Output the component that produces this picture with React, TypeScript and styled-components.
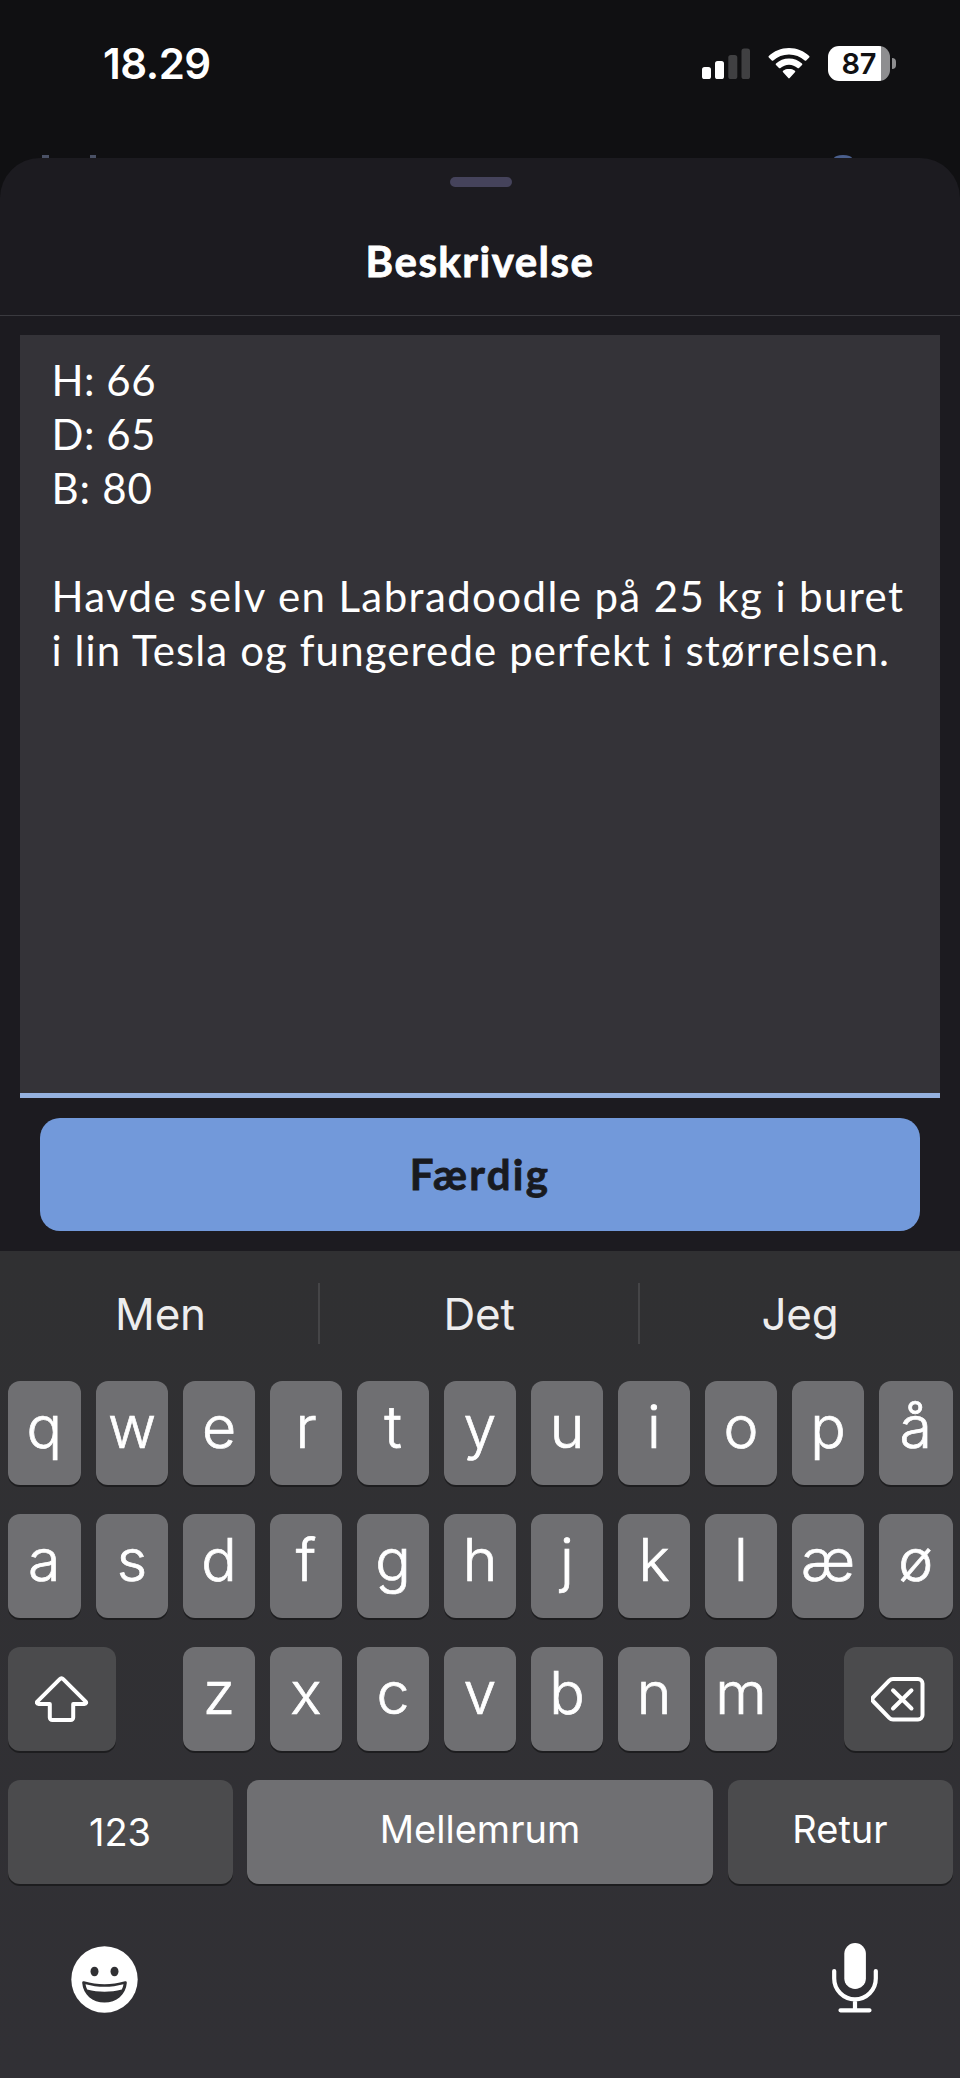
import React from "react";
import styled, { createGlobalStyle } from "styled-components";

const ui = `Inter, "Liberation Sans", sans-serif`;
const brand = `Lato, "Open Sans", sans-serif`;

const GlobalStyle = createGlobalStyle`
  * { box-sizing: border-box; }
  html, body { margin: 0; padding: 0; background: #101012; }
  button { border: 0; padding: 0; margin: 0; background: none; font: inherit; color: inherit; }
`;

const Screen = styled.div`
  width: 960px;
  height: 2078px;
  display: flex;
  flex-direction: column;
  overflow: hidden;
  background: #101012;
  color: #fff;
  font-family: ${ui};
`;

const StatusBar = styled.header`
  height: 154px;
  flex: none;
  display: flex;
  align-items: flex-start;
  justify-content: space-between;
  padding: 39px 64.5px 0 103px;
`;

const Clock = styled.time`
  font-size: 42px;
  line-height: 50px;
  font-weight: 600;
  letter-spacing: -0.5px;
`;

const StatusIcons = styled.div`
  display: flex;
  align-items: flex-start;
  padding-top: 7px;
`;

const SignalIcon = styled.svg`
  width: 48px;
  height: 36px;
  margin-right: 18px;
`;

const WifiIcon = styled.svg`
  width: 42px;
  height: 36px;
  margin-right: 18px;
`;

const Battery = styled.div`
  display: flex;
  align-items: center;
  gap: 2px;
  height: 35px;
`;

const BatteryBody = styled.div`
  width: 61.5px;
  height: 35px;
  border-radius: 11px;
  background: linear-gradient(90deg, #fff 0 53.5px, #8e8e90 53.5px);
  color: #101012;
  font-size: 29px;
  line-height: 35px;
  font-weight: 600;
  letter-spacing: -0.3px;
  text-align: center;
`;

const BatteryTip = styled.div`
  width: 4px;
  height: 11px;
  border-radius: 0 5px 5px 0;
  background: #8e8e90;
`;

const Behind = styled.div`
  height: 4px;
  flex: none;
  display: flex;
  align-items: flex-start;
  padding: 1px 0 0 42px;
`;

const BehindMark = styled.i<{ $w: number; $gap: number; $round?: boolean }>`
  width: ${(p) => p.$w}px;
  height: 3px;
  margin-right: ${(p) => p.$gap}px;
  background: ${(p) => (p.$round ? "#4a5f8c" : "#4a5165")};
  border-radius: ${(p) => (p.$round ? "50% 50% 0 0 / 100% 100% 0 0" : "0")};
`;

const Sheet = styled.main`
  height: 1093px;
  flex: none;
  display: flex;
  flex-direction: column;
  background: #1c1b20;
  border-radius: 40px 40px 0 0;
`;

const SheetHeader = styled.div`
  height: 158px;
  flex: none;
  display: flex;
  flex-direction: column;
  align-items: center;
  border-bottom: 1px solid #3a3a3f;
`;

const Grabber = styled.div`
  width: 62px;
  height: 10px;
  margin: 19px 0 0 1px;
  border-radius: 5px;
  background: #45435b;
`;

const Title = styled.h1`
  margin: 48px 0 0;
  font-family: ${brand};
  font-size: 42px;
  line-height: 52px;
  font-weight: 700;
  letter-spacing: 1.5px;
  -webkit-text-stroke: 0.8px currentColor;
`;

const Description = styled.div`
  height: 763px;
  flex: none;
  margin: 19px 20px 0;
  padding: 18px 0 0 31.5px;
  background: #343338;
  border-bottom: 5px solid #95b1df;
  font-family: ${brand};
  font-size: 42px;
  line-height: 54px;
`;

const Line = styled.div<{ $spacing: number }>`
  height: 54px;
  white-space: pre;
  letter-spacing: ${(p) => p.$spacing}px;
`;

const DoneButton = styled.button`
  height: 113px;
  flex: none;
  margin: 20px 40px 0;
  border-radius: 20px;
  background: #7299da;
  color: #181a20;
  font-family: ${brand};
  font-size: 42px;
  line-height: 109px;
  font-weight: 700;
  letter-spacing: 2.3px;
  -webkit-text-stroke: 0.8px currentColor;
`;

const Keyboard = styled.section`
  flex: 1;
  display: flex;
  flex-direction: column;
  background: linear-gradient(#303032, #313035);
`;

const Suggestions = styled.div`
  height: 130px;
  flex: none;
  display: grid;
  grid-template-columns: 318px 320px 322px;
  align-items: center;
  padding-bottom: 6px;
`;

const Suggestion = styled.button`
  height: 61px;
  color: #ededee;
  font-size: 44px;
  line-height: 63px;
  font-weight: 400;
  letter-spacing: -0.2px;
  &:first-child { padding-left: 3px; }
  & + & { border-left: 2px solid #454547; }
`;

const Row = styled.div`
  height: 104px;
  flex: none;
  display: flex;
  justify-content: space-between;
  margin: 0 7.5px 29px;
`;

const KeyGroup = styled.div`
  display: flex;
  gap: 15px;
`;

const Key = styled.button<{ $width?: number; $dark?: boolean; $small?: boolean; $drop?: number }>`
  width: ${(p) => p.$width ?? 72}px;
  height: 104px;
  display: flex;
  align-items: center;
  justify-content: center;
  padding-bottom: ${(p) => p.$drop ?? 13}px;
  border-radius: 12px;
  background: ${(p) => (p.$dark ? "#4b4b4d" : "#6f6f72")};
  box-shadow: 0 2px 0 #1d1d1f;
  color: #fff;
  font-size: ${(p) => (p.$small ? 38 : 59)}px;
  line-height: 1;
  font-weight: ${(p) => (p.$small ? 400 : 300)};
  -webkit-text-stroke: ${(p) => (p.$small ? 0 : 0.7)}px currentColor;
`;

const KeyIcon = styled.svg`
  width: 54px;
  height: 48px;
`;

const BottomBar = styled.div`
  display: flex;
  justify-content: space-between;
  align-items: flex-start;
  padding: 27px 81px 0 71px;
`;

const EmojiIcon = styled.svg`
  width: 67px;
  height: 67px;
  margin-top: 6px;
`;

const MicIcon = styled.svg`
  width: 48px;
  height: 72px;
  margin-top: 3px;
`;

const lines: [string, number][] = [
  ["H: 66", 0.5],
  ["D: 65", 0.5],
  ["B: 80", 0.8],
  ["", 0],
  ["Havde selv en Labradoodle på 25 kg i buret", 1.39],
  ["i lin Tesla og fungerede perfekt i størrelsen.", 1.11],
];

export default function App() {
  return (
    <>
      <GlobalStyle />
      <Screen>
        <StatusBar>
          <Clock>18.29</Clock>
          <StatusIcons>
            <SignalIcon viewBox="0 0 48 36">
              <rect x="0" y="21" width="9" height="12" rx="2.6" fill="#fff" />
              <rect x="13" y="15" width="9" height="18" rx="2.6" fill="#fff" />
              <rect x="26.3" y="9" width="9" height="24" rx="2.6" fill="#404042" />
              <rect x="39.5" y="2.5" width="8.5" height="30.5" rx="2.6" fill="#404042" />
            </SignalIcon>
            <WifiIcon viewBox="0 0 42 36" fill="#fff">
              <path d="M21 2C13 2 6 5 .8 10c-.5.5-.5 1 0 1.500l3 3c.4.4 1 .4 1.500 0C9.500 10.600 15 8.500 21 8.500s11.500 2.100 15.700 6c.5.4 1.100.4 1.500 0l3-3c.5-.5.5-1 0-1.500C36 5 29 2 21 2z" />
              <path d="M21 12.500c-5 0-9.600 1.900-13 5-.5.5-.5 1 0 1.500l3 3c.4.4 1 .4 1.500 0C14.800 20 17.800 18.700 21 18.700s6.200 1.300 8.500 3.300c.5.4 1.100.4 1.500 0l3-3c.5-.5.5-1 0-1.500-3.400-3.100-8-5-13-5z" />
              <path d="M21 22.700c-2.300 0-4.300.8-5.900 2.100-.5.4-.5 1 0 1.500l5.200 5.800c.4.5 1 .5 1.400 0l5.200-5.800c.5-.5.5-1.100 0-1.500-1.600-1.300-3.600-2.100-5.900-2.100z" />
            </WifiIcon>
            <Battery>
              <BatteryBody>87</BatteryBody>
              <BatteryTip />
            </Battery>
          </StatusIcons>
        </StatusBar>
        <Behind>
          <BehindMark $w={7} $gap={41} />
          <BehindMark $w={6} $gap={738} />
          <BehindMark $w={18} $gap={0} $round />
        </Behind>
        <Sheet>
          <SheetHeader>
            <Grabber />
            <Title>Beskrivelse</Title>
          </SheetHeader>
          <Description>
            {lines.map(([text, spacing], i) => (
              <Line key={i} $spacing={spacing}>{text}</Line>
            ))}
          </Description>
          <DoneButton>Færdig</DoneButton>
        </Sheet>
        <Keyboard>
          <Suggestions>
            {["Men", "Det", "Jeg"].map((w) => <Suggestion key={w}>{w}</Suggestion>)}
          </Suggestions>
          {["qwertyuiopå", "asdfghjklæø"].map((row) => (
            <Row key={row}>
              {[...row].map((c, i) => (
                <Key key={c} $width={i === 0 || i === 10 ? 73.5 : 72}>{c}</Key>
              ))}
            </Row>
          ))}
          <Row>
            <Key $dark $width={108.5} $drop={0}>
              <KeyIcon viewBox="0.5 0 54 48" fill="none" stroke="#fff" strokeWidth="4" strokeLinejoin="round">
                <path d="M25.300 4.200 3 26.300c-1.200 1.300-.6 2.700 1 2.700h11.300v13.500a2.500 2.500 0 0 0 2.500 2.500h18.400a2.500 2.500 0 0 0 2.500-2.500V29H50c1.600 0 2.200-1.400 1-2.700L28.700 4.200c-1.100-1.200-2.300-1.200-3.400 0z" />
              </KeyIcon>
            </Key>
            <KeyGroup>
              {[..."zxcvbnm"].map((c) => <Key key={c}>{c}</Key>)}
            </KeyGroup>
            <Key $dark $width={108.5} $drop={0}>
              <KeyIcon viewBox="0 0 54 48" fill="none" stroke="#fff" strokeWidth="4" strokeLinecap="round" strokeLinejoin="round">
                <path d="M22 4h25a4.500 4.500 0 0 1 4.500 4.500v31.500A4.500 4.500 0 0 1 47 44.500H22c-1.500 0-2.800-.6-3.800-1.600L2.400 26.500c-1.500-1.500-1.500-3 0-4.500L18.200 5.600C19.200 4.600 20.500 4 22 4z" />
                <path d="M22 15.300 40.500 33.500M40.500 15.300 22 33.500" />
              </KeyIcon>
            </Key>
          </Row>
          <Row>
            <Key $dark $small $width={225} $drop={0}>123</Key>
            <Key $small $width={466} $drop={7}>Mellemrum</Key>
            <Key $dark $small $width={225} $drop={7}>Retur</Key>
          </Row>
          <BottomBar>
            <EmojiIcon viewBox="0 0 67 67">
              <circle cx="33.500" cy="33.500" r="33.200" fill="#fff" />
              <ellipse cx="23.500" cy="25.500" rx="4" ry="4.800" fill="#303033" />
              <ellipse cx="43.500" cy="25.500" rx="4" ry="4.800" fill="#303033" />
              <path d="M13 35.300c13.500 4 27.500 4 41 0 1.200-.3 1.900.4 1.800 1.600C54.800 48.500 45.500 56.500 33.500 56.500S12.200 48.500 11.200 36.900c-.1-1.200.6-1.900 1.800-1.600z" fill="#303033" />
              <path d="M14.500 38.300c12.500 3.400 25.500 3.400 38 0-.3 1.900-.9 3.700-1.700 5.200-11.400 3-23.200 3-34.600 0-.8-1.500-1.400-3.300-1.700-5.200z" fill="#fff" />
            </EmojiIcon>
            <MicIcon viewBox="0 0 48 72" fill="none" stroke="#fff" strokeWidth="4.200" strokeLinecap="round">
              <rect x="13.300" y="0" width="21.600" height="46" rx="10.800" fill="#fff" stroke="none" />
              <path d="M3.200 28v7.500a20.800 20.800 0 0 0 41.600 0V28M24 56.500V67M9.500 67.300h29" />
            </MicIcon>
          </BottomBar>
        </Keyboard>
      </Screen>
    </>
  );
}
